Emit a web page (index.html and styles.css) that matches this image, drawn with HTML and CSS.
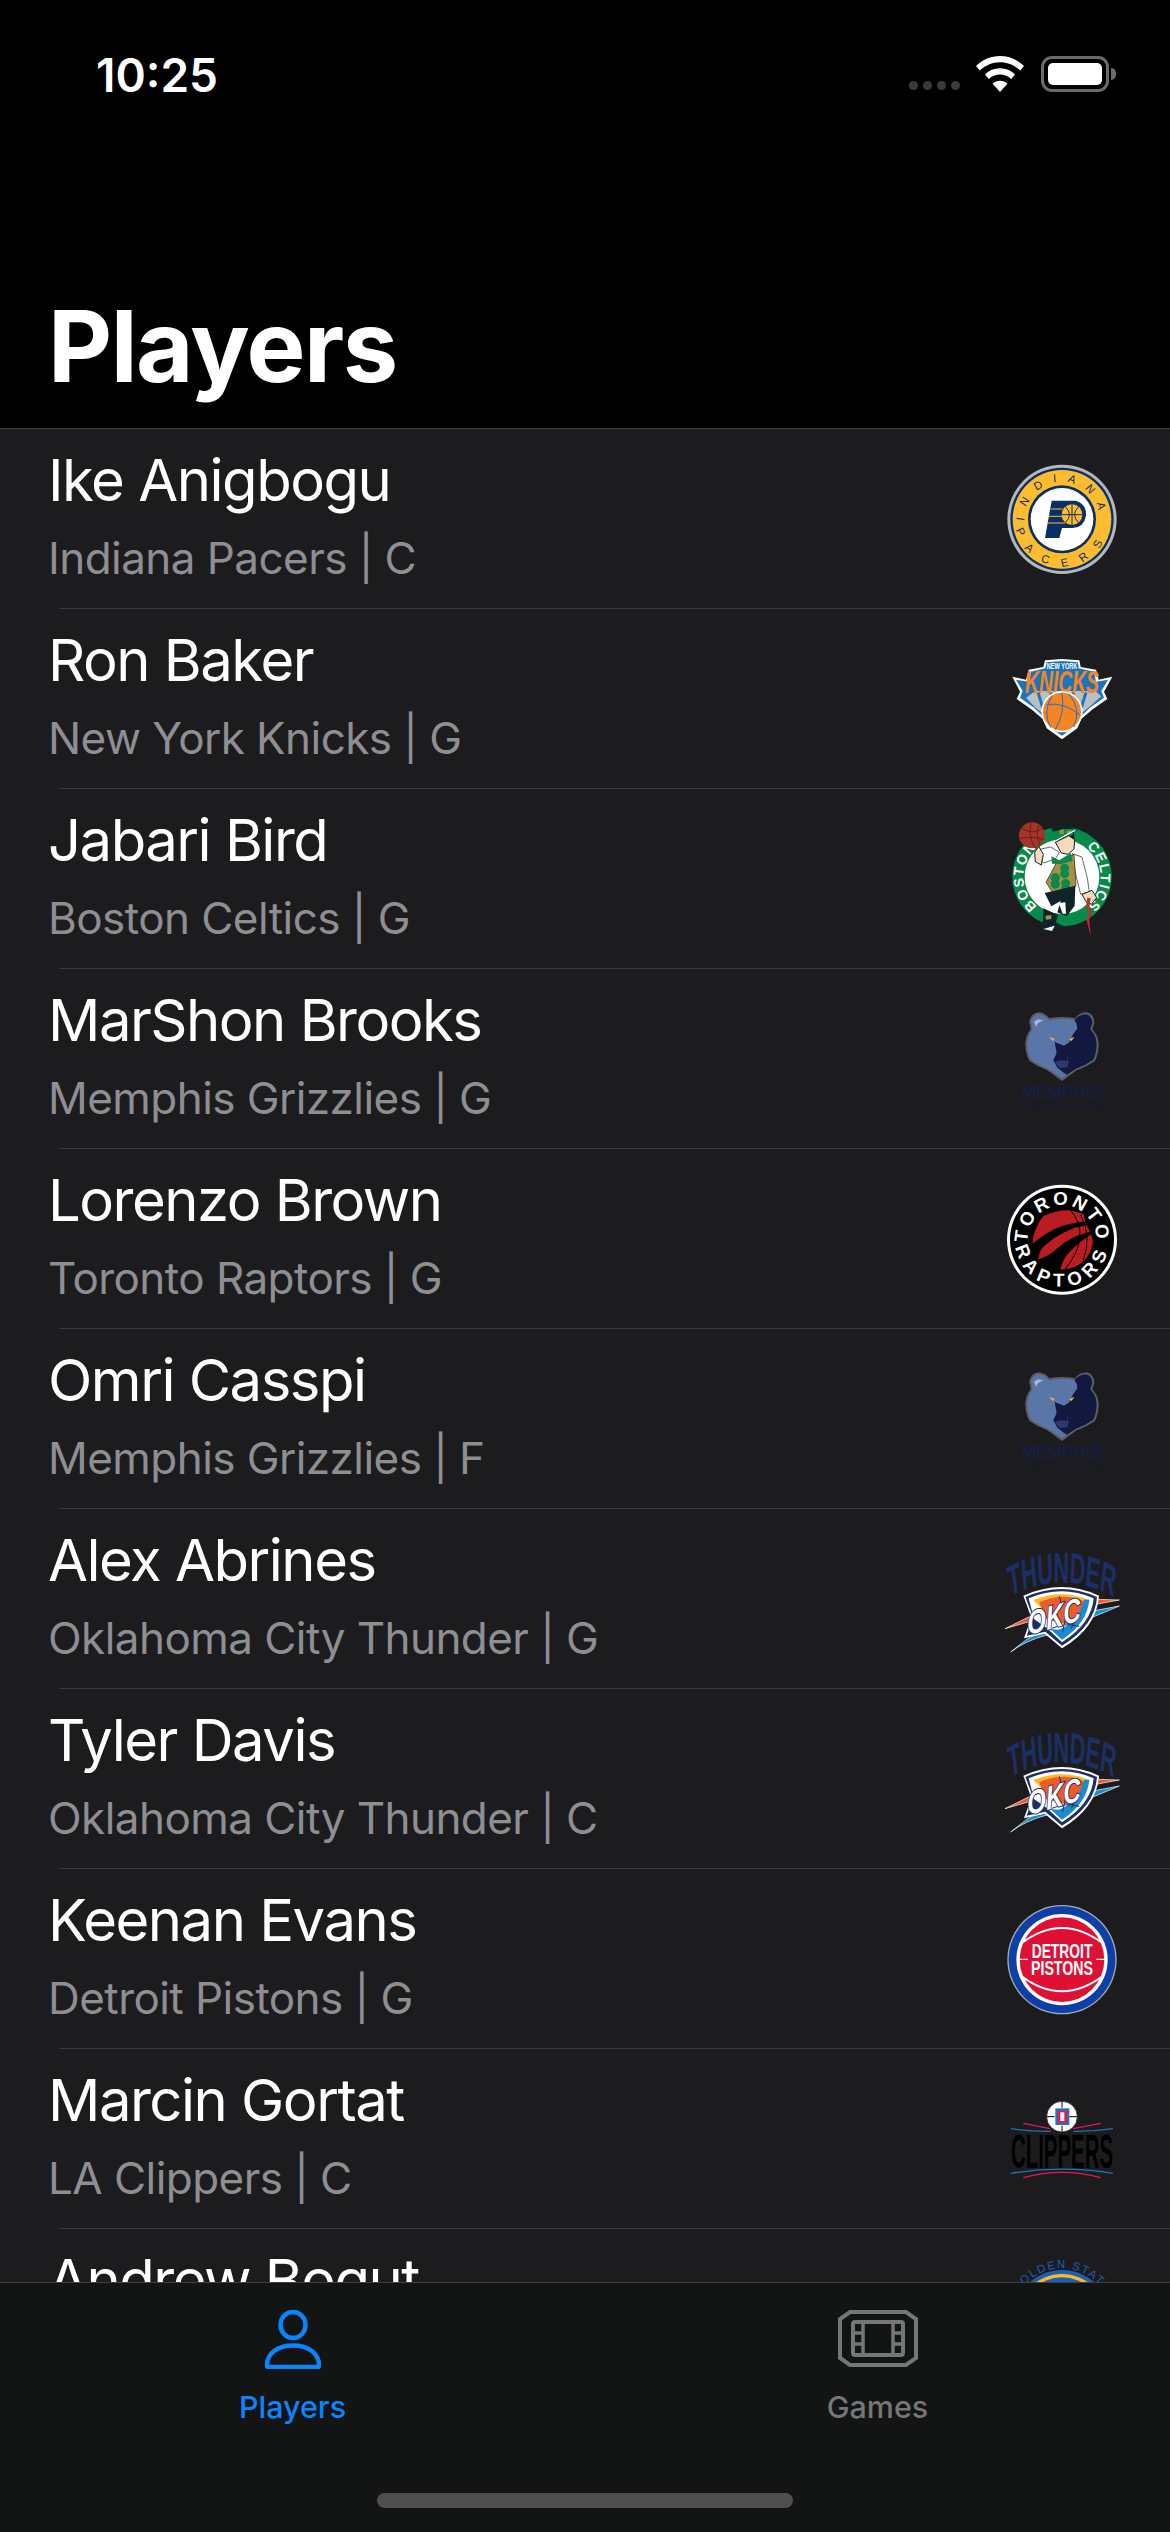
FILE: index.html
```html
<!DOCTYPE html>
<html lang="en">

<head>
    <meta charset="UTF-8">
    <meta name="viewport" content="width=device-width, initial-scale=1.0">
    <title>Players</title>
    <link rel="stylesheet" href="styles.css">
</head>

<body>
    <!-- logos, all drawn on a 360 box (shown at 120px) -->
    <svg class="defs" width="0" height="0">
        <defs>
            <path id="arcPacTop" d="M68,181 A112,112 0 0 1 292,181" />
            <path id="arcPacBot" d="M40,181 A140,140 0 0 0 320,181" />
            <path id="arcRapTop" d="M180,285 A103,103 0 1 1 180.100,285" />
            <path id="arcRapBot" d="M180,41 A141,141 0 1 0 180.100,41" />
            <path id="arcCelLeft" d="M180,289 A116,116 0 0 1 180,57" />
            <path id="arcCelRight" d="M180,57 A116,116 0 0 1 180,289" />
            <path id="arcGolden" d="M28,180 A152,152 0 0 1 332,180" />
            <path id="arcThunder" d="M-340,183 Q0,79 340,183" />

            <symbol id="logo-grizzlies" viewBox="0 0 360 360">
                <path fill="#5c5e62" d="M82,66 Q88,42 110,40 Q130,42 142,58 Q180,50 219,58 Q232,40 254,40 Q276,44 277,71 L271,91 Q290,112 290,136 Q290,165 279,186 Q250,205 224,214 L180,246 L136,214 Q110,205 82,186 Q70,165 70,136 Q70,112 86,91 Z" />
                <path fill="#5a75a8" d="M87,68 Q92,48 110,46 Q128,48 141,64 Q180,56 217,63 Q232,46 252,46 Q270,50 271,71 L265,91 Q284,112 284,136 Q284,162 274,182 Q248,200 222,209 L180,238 L138,209 Q112,200 87,182 Q76,162 76,136 Q76,112 92,91 Z" />
                <path fill="#12183f" d="M217,63 Q232,46 252,46 Q270,50 271,71 L265,91 Q284,112 284,136 Q284,162 274,182 Q248,200 222,209 L194,228 L198,160 Q198,120 225,90 Q228,76 217,63 Z" />
                <path fill="#12183f" d="M144,124 L158,130 L164,162 L154,184 L166,206 L194,228 L198,160 L214,122 L186,140 Z" />
                <path fill="#2c3a6e" d="M158,190 Q178,178 200,188 L196,205 L172,208 Z" />
                <path fill="#a9b8d4" d="M96,70 Q108,54 124,66 Q106,68 103,84 Z" />
                <path fill="#f5b335" d="M142,113 L158,120 L152,127 Z" />
                <path fill="#f5b335" d="M218,113 L202,120 L208,127 Z" />
                <text class="griz-name" x="180" y="298" textLength="240" lengthAdjust="spacingAndGlyphs">MEMPHIS</text>
                <text class="griz-sub" x="180" y="326" textLength="240" lengthAdjust="spacing">GRIZZLIES</text>
            </symbol>

            <symbol id="logo-thunder" viewBox="0 0 360 360">
                <g transform="translate(180,0) scale(0.5,1)">
                    <text class="okc-word"><textPath href="#arcThunder" startOffset="50%">THUNDER</textPath></text>
                </g>
                <path fill="#ef5a2a" stroke="#fff" stroke-width="2" d="M9,269 L92,228 L96,244 Z" />
                <path fill="#ef5a2a" stroke="#fff" stroke-width="2" d="M352,183 L285,181 L281,196 Z" />
                <path fill="#1a8bd0" stroke="#fff" stroke-width="2" d="M352,201 L272,216 L268,236 Z" />
                <path fill="#1a8bd0" stroke="#fff" stroke-width="2" d="M26,339 Q70,300 122,272 L135,288 Q70,305 26,339 Z" />
                <path fill="#fff" d="M64,170 Q180,118 291,170 Q285,265 180,328 L128,284 L66,298 L88,236 Z" />
                <path fill="#1c2f66" d="M70,174 Q180,126 285,174 Q279,260 180,320 L130,278 L74,290 L94,236 Z" />
                <path fill="#fff" d="M80,178 Q180,136 275,178 Q269,254 180,310 L135,268 L96,240 Z" />
                <path fill="#fdb927" d="M94,183 Q180,148 262,183 L240,240 L120,210 Z" />
                <path fill="#ef5a2a" d="M112,190 Q180,158 245,186 Q240,230 216,262 L130,240 Z" />
                <path fill="#1a8bd0" d="M262,182 Q256,252 180,302 L145,270 L170,272 Q230,250 246,182 Z" />
                <path fill="none" stroke="#1c2f66" stroke-width="3" d="M172,172 L178,194 M150,268 Q190,250 232,262 M190,240 L182,278 M220,240 L208,268" />
                <text class="okc-mark" transform="translate(158,266) rotate(-16) skewX(-12)" textLength="166" lengthAdjust="spacingAndGlyphs">OKC</text>
            </symbol>
        </defs>
    </svg>

    <div class="phone">
        <header class="top">
            <div class="status">
                <span class="clock">10:25</span>
                <div class="status-icons">
                    <div class="signal"><i></i><i></i><i></i><i></i></div>
                    <svg class="wifi" width="48" height="36" viewBox="0 0 48 36">
                        <path fill="#fff" d="M24,0 C33,0 41.500,3.600 48,10 L44.200,14.600 C38.800,9.400 31.800,6.300 24,6.300 C16.200,6.300 9.200,9.400 3.800,14.600 L0,10 C6.500,3.600 15,0 24,0 Z" />
                        <path fill="#fff" d="M24,12.300 C29.800,12.300 35,14.500 39,18.400 L35.200,23 C32.200,20.200 28.300,18.500 24,18.500 C19.700,18.500 15.800,20.200 12.800,23 L9,18.400 C13,14.500 18.200,12.300 24,12.300 Z" />
                        <path fill="#fff" d="M24,24.700 C26.900,24.700 29.500,25.800 31.500,27.600 L24,36 L16.500,27.600 C18.500,25.800 21.100,24.700 24,24.700 Z" />
                    </svg>
                    <div class="battery">
                        <div class="battery-body"><div class="battery-fill"></div></div>
                        <div class="battery-cap"></div>
                    </div>
                </div>
            </div>
            <h1 class="title">Players</h1>
        </header>

        <main class="list">
            <div class="row">
                <div class="info">
                    <div class="name">Ike Anigbogu</div>
                    <div class="team">Indiana Pacers | C</div>
                </div>
                <svg class="logo" viewBox="0 0 360 360">
                    <circle cx="180" cy="181" r="164" fill="#b5b8bb" />
                    <circle cx="180" cy="181" r="155" fill="#0a2f63" />
                    <circle cx="180" cy="181" r="148" fill="#fdbb30" />
                    <circle cx="180" cy="181" r="102" fill="#0a2f63" />
                    <circle cx="180" cy="181" r="94" fill="#fff" />
                    <text class="pac-text pac-top"><textPath href="#arcPacTop" startOffset="50%">INDIANA</textPath></text>
                    <text class="pac-text pac-bot"><textPath href="#arcPacBot" startOffset="50%">PACERS</textPath></text>
                    <path fill="#0a2f63" d="M149,125 H222 Q254,135 252,170 Q246,205 212,207 H180 L172,237 H129 Z" />
                    <circle cx="210" cy="167" r="31" fill="#fdbb30" />
                    <path fill="none" stroke="#0a2f63" stroke-width="3" d="M210,136 V198 M179,167 H241 M190,143 Q215,167 190,191 M230,143 Q205,167 230,191" />
                    <path fill="none" stroke="#fdbb30" stroke-width="3" d="M146,150 H182 M140,172 H180 M135,192 H190" />
                </svg>
            </div>

            <div class="row">
                <div class="info">
                    <div class="name">Ron Baker</div>
                    <div class="team">New York Knicks | G</div>
                </div>
                <svg class="logo" viewBox="0 0 360 360">
                    <path fill="#fff" d="M129,64 L180,60 L232,64 L236,84 L282,92 L290,122 L331,113 L306,158 L316,180 L270,212 L238,240 L226,268 L180,301 L134,268 L122,240 L90,212 L44,180 L54,158 L31,113 L72,122 L80,92 L124,84 Z" />
                    <path fill="#1a76bc" d="M134,70 L180,66 L228,70 L230,88 L276,98 L282,128 L318,122 L298,156 L306,176 L264,206 L232,236 L220,262 L180,290 L140,262 L128,236 L96,206 L54,176 L62,156 L42,122 L80,128 L86,98 L130,88 Z" />
                    <path fill="#bcbec0" d="M72,176 L100,156 L280,156 L298,172 L262,204 L240,222 L120,222 L98,204 Z" />
                    <path fill="none" stroke="#1a76bc" stroke-width="9" d="M108,160 L122,206 M146,160 L152,190 M214,160 L208,190 M252,160 L238,206" />
                    <text class="knicks-top" x="180" y="91" textLength="92" lengthAdjust="spacingAndGlyphs">NEW YORK</text>
                    <text class="knicks-word" x="180" y="162" textLength="222" lengthAdjust="spacingAndGlyphs">KNICKS</text>
                    <circle cx="180" cy="218" r="62" fill="#fff" />
                    <circle cx="180" cy="218" r="57" fill="#f58426" />
                    <path fill="none" stroke="#1a76bc" stroke-width="3" d="M150,170 Q120,220 146,266 M180,161 Q190,220 160,272 M134,196 Q190,190 236,230 M200,164 Q240,210 215,264" />
                </svg>
            </div>

            <div class="row">
                <div class="info">
                    <div class="name">Jabari Bird</div>
                    <div class="team">Boston Celtics | G</div>
                </div>
                <svg class="logo" viewBox="0 0 360 360">
                    <circle cx="180" cy="173" r="152" fill="#0b2a2a" />
                    <circle cx="180" cy="173" r="149" fill="#0a8a4a" />
                    <circle cx="180" cy="173" r="112" fill="#fff" />
                    <text class="cel-text"><textPath href="#arcCelLeft" startOffset="50%">BOSTON</textPath></text>
                    <text class="cel-text"><textPath href="#arcCelRight" startOffset="50%">CELTICS</textPath></text>
                    <circle cx="90" cy="49" r="39" fill="#a5342a" />
                    <path fill="none" stroke="#5a1a14" stroke-width="2.500" d="M58,28 Q95,48 122,28 M55,58 Q95,50 125,62 M88,10 Q76,50 100,88 M110,18 Q100,50 114,78" />
                    <path fill="#0e2428" d="M148,28 L178,15 L214,30 L218,60 L160,60 Z" />
                    <path fill="#0a8a4a" d="M152,38 L190,30 L212,30 L212,48 L160,66 Z" />
                    <path fill="#a98f44" d="M172,34 L184,30 L186,44 L174,46 Z M194,36 L206,33 L206,44 L196,46 Z" />
                    <path fill="none" stroke="#fff" stroke-width="4" d="M150,72 L218,34" />
                    <path fill="#f8d9bb" stroke="#0e2428" stroke-width="3" d="M160,70 L200,50 L218,62 L216,90 L198,106 L178,102 Z" />
                    <path fill="#fff" stroke="#0e2428" stroke-width="2" d="M108,92 L146,84 L172,100 L160,120 L124,132 L112,112 Z" />
                    <path fill="#f8d9bb" stroke="#0e2428" stroke-width="3" d="M98,100 L110,82 L124,106 L118,138 L100,128 Z" />
                    <path fill="#fff" stroke="#0e2428" stroke-width="2" d="M210,104 L240,114 L256,178 L262,218 L236,226 L222,170 Z" />
                    <path fill="#f8d9bb" stroke="#0e2428" stroke-width="3" d="M240,226 L270,214 L284,236 L268,256 L252,248 Z" />
                    <path fill="#a98f44" stroke="#0e2428" stroke-width="2" d="M132,190 L164,130 L216,106 L222,200 L160,234 Z" />
                    <path fill="#0a8a4a" d="M150,186 a14,14 0 1 1 20,0 a14,14 0 1 1 -20,0 Z M178,156 a13,13 0 1 1 20,0 a13,13 0 1 1 -20,0 Z M180,200 a13,13 0 1 1 22,0 a13,13 0 1 1 -22,0 Z" />
                    <path fill="#0a8a4a" d="M148,112 L172,124 L206,102 L212,126 L176,136 L150,134 Z" />
                    <path fill="#0e2428" d="M128,222 L220,200 L218,260 L194,292 L166,280 L176,246 L148,262 Z" />
                    <path fill="#0e2428" d="M124,268 L168,288 L162,310 L186,322 L150,338 L122,332 Z" />
                    <path fill="#fff" d="M170,252 L190,250 L192,284 L182,284 Z M124,330 L158,320 L150,336 Z" />
                    <path fill="#a98f44" d="M130,290 L148,288 L148,300 L132,302 Z" />
                    <path fill="#b7312b" d="M256,236 L266,238 L262,262 L272,276 L262,300 L266,352 L254,304 L262,276 L252,262 Z" />
                </svg>
            </div>

            <div class="row">
                <div class="info">
                    <div class="name">MarShon Brooks</div>
                    <div class="team">Memphis Grizzlies | G</div>
                </div>
                <svg class="logo"><use href="#logo-grizzlies" /></svg>
            </div>

            <div class="row">
                <div class="info">
                    <div class="name">Lorenzo Brown</div>
                    <div class="team">Toronto Raptors | G</div>
                </div>
                <svg class="logo" viewBox="0 0 360 360">
                    <circle cx="180" cy="182" r="165" fill="#fff" />
                    <circle cx="180" cy="182" r="156" fill="#000" />
                    <text class="rap-text rap-top"><textPath href="#arcRapTop" startOffset="50%">TORONTO</textPath></text>
                    <text class="rap-text rap-bot"><textPath href="#arcRapBot" startOffset="50%">RAPTORS</textPath></text>
                    <path fill="#ba1c21" d="M92,194 Q92,165 104,146 Q112,124 125,111 Q165,92 205,94 L245,106 L250,128 Q165,130 92,194 Z" />
                    <path fill="#ba1c21" d="M109,241 Q112,212 130,198 Q185,150 254,138 L264,158 Q205,172 168,206 Q140,232 109,241 Z" />
                    <path fill="#ba1c21" d="M175,272 Q182,240 200,222 Q230,190 268,166 L273,188 Q265,240 222,262 Q200,272 175,272 Z" />
                    <path fill="none" stroke="#000" stroke-width="3" d="M205,92 Q270,170 190,270 M236,108 Q270,170 244,244" />
                </svg>
            </div>

            <div class="row">
                <div class="info">
                    <div class="name">Omri Casspi</div>
                    <div class="team">Memphis Grizzlies | F</div>
                </div>
                <svg class="logo"><use href="#logo-grizzlies" /></svg>
            </div>

            <div class="row">
                <div class="info">
                    <div class="name">Alex Abrines</div>
                    <div class="team">Oklahoma City Thunder | G</div>
                </div>
                <svg class="logo"><use href="#logo-thunder" /></svg>
            </div>

            <div class="row">
                <div class="info">
                    <div class="name">Tyler Davis</div>
                    <div class="team">Oklahoma City Thunder | C</div>
                </div>
                <svg class="logo"><use href="#logo-thunder" /></svg>
            </div>

            <div class="row">
                <div class="info">
                    <div class="name">Keenan Evans</div>
                    <div class="team">Detroit Pistons | G</div>
                </div>
                <svg class="logo" viewBox="0 0 360 360">
                    <circle cx="180" cy="182" r="164" fill="#a8aaad" />
                    <circle cx="180" cy="182" r="160" fill="#0c3fa8" />
                    <circle cx="180" cy="182" r="137" fill="#fff" />
                    <circle cx="180" cy="182" r="127" fill="#e01034" />
                    <path fill="none" stroke="#fff" stroke-width="6" d="M54,136 Q180,38 306,136 M54,228 Q180,326 306,228" />
                    <path fill="none" stroke="#fff" stroke-width="4" d="M48,181 H78 M282,181 H312" />
                    <text class="pis-text" x="180" y="178" textLength="182" lengthAdjust="spacingAndGlyphs">DETROIT</text>
                    <text class="pis-text" x="180" y="229" textLength="186" lengthAdjust="spacingAndGlyphs">PISTONS</text>
                </svg>
            </div>

            <div class="row">
                <div class="info">
                    <div class="name">Marcin Gortat</div>
                    <div class="team">LA Clippers | C</div>
                </div>
                <svg class="logo" viewBox="0 0 360 360">
                    <circle cx="180" cy="113" r="46" fill="#fff" stroke="#000" stroke-width="2" />
                    <path fill="none" stroke="#000" stroke-width="3" d="M180,68 V86 M180,140 V158 M135,113 H158 M202,113 H225" />
                    <rect x="160" y="88" width="42" height="50" fill="#1a76bc" />
                    <rect x="167" y="95" width="28" height="36" fill="#ed174c" />
                    <rect x="175" y="100" width="12" height="26" fill="#fff" />
                    <text class="clip-word" x="180" y="268" textLength="306" lengthAdjust="spacingAndGlyphs">CLIPPERS</text>
                    <path fill="none" stroke="#ed174c" stroke-width="4" d="M64,133 L144,149 M296,133 L214,149 M64,296 Q180,264 296,296" />
                    <path fill="none" stroke="#1a76bc" stroke-width="4" d="M27,149 Q90,158 146,157 M333,149 Q270,158 214,157 M27,283 Q180,258 333,283" />
                </svg>
            </div>

            <div class="row">
                <div class="info">
                    <div class="name">Andrew Bogut</div>
                    <div class="team">Golden State Warriors | C</div>
                </div>
                <svg class="logo" viewBox="0 0 360 360">
                    <text class="gs-text"><textPath href="#arcGolden" startOffset="50%">GOLDEN STATE</textPath></text>
                    <circle cx="180" cy="180" r="147" fill="#1d5fb0" />
                    <circle cx="180" cy="180" r="135" fill="#fdb927" />
                    <circle cx="180" cy="180" r="125" fill="#1d5fb0" />
                </svg>
            </div>
        </main>

        <nav class="tabs">
            <div class="tab tab-on">
                <svg class="tab-icon" width="60" height="60" viewBox="0 0 60 60">
                    <ellipse cx="30" cy="16" rx="12.500" ry="13" fill="none" stroke="currentColor" stroke-width="4.500" />
                    <path fill="none" stroke="currentColor" stroke-width="4.500" stroke-linejoin="round" d="M4,56.500 C4,44 15,36.500 30,36.500 C45,36.500 56,44 56,56.500 C56,57.500 55.500,58 54.500,58 H5.500 C4.500,58 4,57.500 4,56.500 Z" />
                </svg>
                <span class="tab-label">Players</span>
            </div>
            <div class="tab">
                <svg class="tab-icon" width="80" height="60" viewBox="0 0 80 60">
                    <path fill="none" stroke="currentColor" stroke-width="4" d="M12,3 H68 L78,10 V49 L68,56 H12 L2,49 V10 Z" />
                    <rect x="15" y="13" width="50" height="33" rx="2" fill="none" stroke="currentColor" stroke-width="4" />
                    <path fill="none" stroke="currentColor" stroke-width="3.500" d="M25,13 V46 M55,13 V46 M15,24 H25 M15,35 H25 M55,24 H65 M55,35 H65" />
                </svg>
                <span class="tab-label">Games</span>
            </div>
            <div class="home-bar"></div>
        </nav>
    </div>
</body>

</html>
```

FILE: styles.css
```css
* {
    margin: 0;
    padding: 0;
    box-sizing: border-box;
}

html,
body {
    height: 2532px;
    overflow: hidden;
}

body {
    background-color: #000;
    font-family: Inter, "Liberation Sans", sans-serif;
    color: #fff;
}

.defs {
    position: absolute;
}

.phone {
    width: 1170px;
    height: 2532px;
    display: flex;
    flex-direction: column;
    overflow: hidden;
}

/* top area */
.top {
    height: 429px;
    flex-shrink: 0;
    background-color: #000;
    border-bottom: 1px solid #3f3f41;
}

.status {
    height: 286px;
    padding: 48px 54px 0 96px;
    display: flex;
    justify-content: space-between;
    align-items: flex-start;
}

.clock {
    font-size: 46px;
    line-height: 54px;
    font-weight: 600;
}

.status-icons {
    display: flex;
    align-items: flex-start;
    padding-top: 8px;
}

.signal {
    display: flex;
    gap: 5px;
    padding-top: 25px;
    margin-right: 16px;
}

.signal i {
    width: 9px;
    height: 9px;
    border-radius: 50%;
    background-color: #3a3a3a;
}

.battery {
    display: flex;
    align-items: center;
    margin-left: 17px;
}

.battery-body {
    width: 68px;
    height: 36px;
    padding: 4px;
    border: 3px solid #6b6b6b;
    border-radius: 11px;
}

.battery-fill {
    width: 100%;
    height: 100%;
    background-color: #fff;
    border-radius: 5px;
}

.battery-cap {
    width: 5px;
    height: 12px;
    margin-left: 2px;
    background-color: #6b6b6b;
    border-radius: 0 6px 6px 0;
}

.title {
    padding-left: 48px;
    font-size: 99px;
    line-height: 120px;
    font-weight: 700;
    letter-spacing: -1.5px;
}

/* list */
.list {
    flex: 1;
    min-height: 0;
    overflow: hidden;
    background-color: #1c1c1e;
}

.row {
    position: relative;
    height: 180px;
    padding: 0 48px;
    display: flex;
    justify-content: space-between;
    align-items: center;
}

.row::after {
    content: "";
    position: absolute;
    left: 60px;
    right: 0;
    bottom: 0;
    height: 1px;
    background-color: #3a3a3c;
}

.info {
    margin-bottom: 8px;
}

.name {
    font-size: 58px;
    line-height: 72px;
    letter-spacing: -1.5px;
}

.team {
    margin-top: 14px;
    font-size: 44px;
    line-height: 56px;
    letter-spacing: -0.55px;
    color: #8e8e93;
}

.logo {
    width: 120px;
    height: 120px;
    flex-shrink: 0;
}

/* logo lettering */
.pac-text {
    font: 400 34px "Liberation Sans", sans-serif;
    fill: #0a2f63;
    text-anchor: middle;
}

.pac-top {
    letter-spacing: 32px;
}

.pac-bot {
    letter-spacing: 40px;
}

.knicks-top {
    font: 700 28px "Liberation Sans", sans-serif;
    fill: #fff;
    text-anchor: middle;
}

.knicks-word {
    font: italic 700 92px "Liberation Sans", sans-serif;
    fill: #f58426;
    text-anchor: middle;
}

.cel-text {
    font: 700 42px "Liberation Sans", sans-serif;
    letter-spacing: 4px;
    fill: #fff;
    text-anchor: middle;
}

.griz-name {
    font: 400 52px "Liberation Sans", sans-serif;
    fill: #161d52;
    text-anchor: middle;
}

.griz-sub {
    font: 700 24px "Liberation Sans", sans-serif;
    fill: #12183f;
    text-anchor: middle;
}

.rap-text {
    font: 700 56px "Liberation Sans", sans-serif;
    fill: #fff;
    text-anchor: middle;
}

.rap-top {
    letter-spacing: 9px;
}

.rap-bot {
    letter-spacing: 18px;
}

.pis-text {
    font: 700 58px "Liberation Sans", sans-serif;
    fill: #fff;
    text-anchor: middle;
}

.clip-word {
    font: 700 142px "Liberation Sans", sans-serif;
    fill: #000;
    text-anchor: middle;
}

.gs-text {
    font: 400 34px "Liberation Sans", sans-serif;
    letter-spacing: 5px;
    fill: #1d5fb0;
    text-anchor: middle;
}

.okc-word {
    font: 700 130px "Liberation Sans", sans-serif;
    fill: #1c2f66;
    text-anchor: middle;
}

.okc-mark {
    font: italic 700 96px "Liberation Sans", sans-serif;
    fill: #fff;
    stroke: #1c2f66;
    stroke-width: 6px;
    paint-order: stroke;
    text-anchor: middle;
}

/* tab bar */
.tabs {
    position: relative;
    height: 250px;
    flex-shrink: 0;
    display: flex;
    background-color: #131414;
    border-top: 1px solid #3f3f41;
}

.tab {
    flex: 1;
    padding-top: 26px;
    display: flex;
    flex-direction: column;
    align-items: center;
    color: #757676;
}

.tab-on {
    color: #0a84ff;
}

.tab-icon {
    display: block;
}

.tab-label {
    margin-top: 20px;
    font-size: 30.5px;
    line-height: 36px;
    font-weight: 500;
}

.home-bar {
    position: absolute;
    left: 377px;
    bottom: 24px;
    width: 416px;
    height: 15px;
    background-color: #4f4f4f;
    border-radius: 8px;
}
```
